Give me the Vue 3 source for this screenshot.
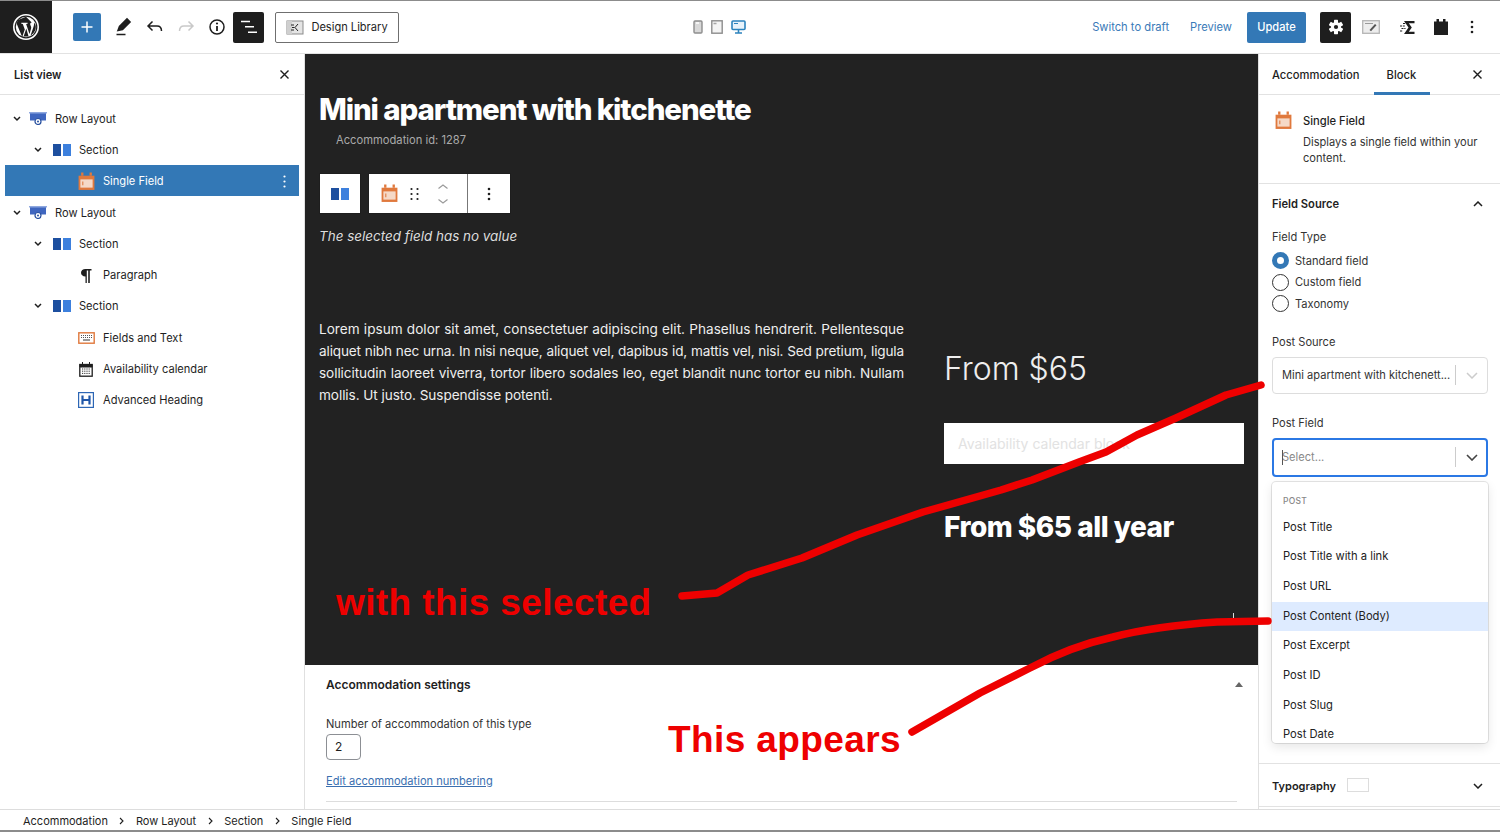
<script setup>
const listRows = [
  { label: 'Row Layout', depth: 0, icon: 'row', caret: true },
  { label: 'Section', depth: 1, icon: 'section', caret: true },
  { label: 'Single Field', depth: 2, icon: 'field', selected: true },
  { label: 'Row Layout', depth: 0, icon: 'row', caret: true },
  { label: 'Section', depth: 1, icon: 'section', caret: true },
  { label: 'Paragraph', depth: 2, icon: 'para' },
  { label: 'Section', depth: 1, icon: 'section', caret: true },
  { label: 'Fields and Text', depth: 2, icon: 'keys' },
  { label: 'Availability calendar', depth: 2, icon: 'cal' },
  { label: 'Advanced Heading', depth: 2, icon: 'head' }
]

const loremLines = [
  'Lorem ipsum dolor sit amet, consectetuer adipiscing elit. Phasellus hendrerit. Pellentesque',
  'aliquet nibh nec urna. In nisi neque, aliquet vel, dapibus id, mattis vel, nisi. Sed pretium, ligula',
  'sollicitudin laoreet viverra, tortor libero sodales leo, eget blandit nunc tortor eu nibh. Nullam',
  'mollis. Ut justo. Suspendisse potenti.'
]

const postFields = ['Post Title', 'Post Title with a link', 'Post URL', 'Post Content (Body)', 'Post Excerpt', 'Post ID', 'Post Slug', 'Post Date']
const crumbs = ['Accommodation', 'Row Layout', 'Section', 'Single Field']
const fieldTypes = ['Standard field', 'Custom field', 'Taxonomy']
</script>

<template>
  <div class="editor">
    <header class="topbar">
      <div class="wp-logo">
        <svg width="28" height="28" viewBox="0 0 28 28">
          <circle cx="14" cy="14" r="12.200" fill="none" stroke="#fff" stroke-width="1.600" />
          <circle cx="14" cy="14" r="10.200" fill="#fff" />
          <path d="M4.600 10.500 10.200 24l2.600-7.600-2-5.400-1.500-.2v-1h6.300v1l-1.500.2 3.400 10 1-3.400c.5-1.500.7-2.400.7-3.100 0-1.300-1-2.200-1-3.300 0-.8.6-1.500 1.500-1.600L14 3.800 6 7z" fill="#1e1e1e" />
          <path d="M14.300 15.500 11.700 23.300c1.500.4 3.100.4 4.800-.1zM22 9.500c.3 2.500-.4 4-1.200 6.400l-2.300 6.600C22 20.600 24 17 23.800 13.500c-.1-1.400-.8-2.900-1.800-4z" fill="#1e1e1e" />
        </svg>
      </div>
      <div class="tools-left">
        <button class="add-btn">
          <svg width="14" height="14" viewBox="0 0 14 14"><path d="M7 1.500v11M1.500 7h11" stroke="#fff" stroke-width="1.500" /></svg>
        </button>
        <svg class="ic pen" width="20" height="22" viewBox="0 0 20 22"><path d="M5 14.500 6.500 10.500 14 3l3 3-7.500 7.500zM3.500 18.500h9" fill="#1e1e1e" stroke="#1e1e1e" stroke-width="1.600" /></svg>
        <svg class="ic undo" width="18" height="14" viewBox="0 0 18 14"><path d="M6.500 1.500 2 6l4.500 4.500M2 6h9c2.800 0 4.500 1.800 4.500 5" fill="none" stroke="#1e1e1e" stroke-width="1.500" /></svg>
        <svg class="ic redo" width="18" height="14" viewBox="0 0 18 14"><path d="M11.500 1.500 16 6l-4.500 4.500M16 6H7c-2.800 0-4.500 1.800-4.500 5" fill="none" stroke="#c9c9c9" stroke-width="1.500" /></svg>
        <svg class="ic info" width="16" height="16" viewBox="0 0 16 16"><circle cx="8" cy="8" r="7" fill="none" stroke="#1e1e1e" stroke-width="1.500" /><path d="M8 7v5" stroke="#1e1e1e" stroke-width="1.800" /><circle cx="8" cy="4.500" r="1.100" fill="#1e1e1e" /></svg>
        <button class="dark-btn list-btn">
          <svg width="18" height="14" viewBox="0 0 18 14"><path d="M1 1.500h9M5 6.800h9M8 12.200h9" stroke="#fff" stroke-width="1.500" /></svg>
        </button>
        <button class="design-btn">
          <svg width="18" height="15" viewBox="0 0 18 15"><rect x="1" y="1" width="16" height="13" fill="#e4e4e4" stroke="#8b8b8b" /><rect x="1" y="1" width="5" height="13" fill="#cfcfcf" /><path d="M12 4 9 7.500l3 3.500M5 5h3M6 7.500h2.500M5 10h3" fill="none" stroke="#222" stroke-width="1" /></svg>
          Design Library
        </button>
      </div>
      <div class="devices">
        <svg width="10" height="14" viewBox="0 0 10 14"><rect x="1" y="1" width="8" height="12" rx="1" fill="#d8d8d8" stroke="#8d8d8d" stroke-width="1.400" /><path d="M3 3h3" stroke="#fff" stroke-width="1.500" /></svg>
        <svg width="12" height="14" viewBox="0 0 12 14"><rect x=".8" y=".8" width="10.400" height="12.400" fill="#f4f4f4" stroke="#8d8d8d" stroke-width="1.400" /><path d="M2.500 3.500h3" stroke="#a5a5a5" stroke-width="1.500" /></svg>
        <svg width="15" height="14" viewBox="0 0 15 14"><rect x="1" y="1" width="13" height="8.500" rx="1" fill="#e8f3fb" stroke="#2c83bd" stroke-width="1.600" /><path d="M3 3.500h4" stroke="#2c83bd" /><path d="M7.500 10v2.500M4 13h7" stroke="#2c83bd" stroke-width="1.600" /></svg>
      </div>
      <div class="tools-right">
        <a class="link draft">Switch to draft</a>
        <a class="link preview">Preview</a>
        <button class="update">Update</button>
        <button class="dark-btn gear">
          <svg width="16" height="16" viewBox="0 0 16 16">
            <g fill="#fff">
              <rect x="6" y=".8" width="4" height="14.400" rx=".6" />
              <rect x="6" y=".8" width="4" height="14.400" rx=".6" transform="rotate(60 8 8)" />
              <rect x="6" y=".8" width="4" height="14.400" rx=".6" transform="rotate(120 8 8)" />
              <circle cx="8" cy="8" r="5" />
            </g>
            <circle cx="8" cy="8" r="2.100" fill="#1e1e1e" />
          </svg>
        </button>
        <svg class="ic panel-a" width="18" height="14" viewBox="0 0 18 14"><rect x=".7" y=".7" width="16.600" height="12.600" fill="#ededed" stroke="#b5b5b5" stroke-width="1.300" /><path d="M3 3.500h8" stroke="#9a9a9a" /><path d="m7.500 10 5.500-6 1.500 1.300-5.500 6z" fill="#555" /></svg>
        <svg class="ic panel-b" width="16" height="15" viewBox="0 0 16 15"><path d="M5 1h10.500v2.200H9.800l3 4.300-3 4.300h5.700V14H5l4.500-6.500z" fill="#1e1e1e" /><path d="M4 3.500h3M1 6h5M2.500 8.500h4M1 11h3" stroke="#1e1e1e" stroke-width="1.100" stroke-dasharray="2 .8" /></svg>
        <svg class="ic panel-c" width="16" height="18" viewBox="0 0 16 18"><path d="M1 3.500h2.500V1h2.500v2.500h4V1h2.500v2.500H15V17H1z" fill="#1e1e1e" /></svg>
        <svg class="ic dots" width="4" height="14" viewBox="0 0 4 14"><circle cx="2" cy="2" r="1.300" fill="#1e1e1e" /><circle cx="2" cy="7" r="1.300" fill="#1e1e1e" /><circle cx="2" cy="12" r="1.300" fill="#1e1e1e" /></svg>
      </div>
    </header>

    <div class="body">
      <aside class="list-panel">
        <div class="panel-head">
          <span class="strong">List view</span>
          <svg width="11" height="11" viewBox="0 0 11 11"><path d="m1.500 1.500 8 8M9.500 1.500l-8 8" stroke="#1e1e1e" stroke-width="1.400" /></svg>
        </div>
        <ul class="tree">
          <li v-for="(row, i) in listRows" :key="i" class="tree-row" :class="['d' + row.depth, { selected: row.selected }]">
            <svg v-if="row.caret" class="caret" width="8" height="6" viewBox="0 0 8 6"><path d="m1 1 3 3 3-3" fill="none" stroke="#1e1e1e" stroke-width="1.500" /></svg>
            <span class="tree-icon">
              <svg v-if="row.icon === 'row'" width="18" height="13" viewBox="0 0 18 13"><path d="M1 1h16v7.500H1z" fill="#3f66bf" /><rect x="0" y="0" width="18" height="1.500" fill="#8fa8df" /><circle cx="9" cy="9.500" r="3" fill="#fff" stroke="#28509f" stroke-width="1.200" /><circle cx="9" cy="9.500" r="1" fill="#28509f" /></svg>
              <svg v-else-if="row.icon === 'section'" width="18" height="12" viewBox="0 0 18 12"><rect x="0" width="8" height="12" fill="#1d4f9f" /><rect x="10" width="8" height="12" fill="#3d80dd" /></svg>
              <svg v-else-if="row.icon === 'field'" width="17" height="19" viewBox="0 0 16 18"><path d="M.5 3.500h15V17H.5z" fill="#e0793d" /><path d="M4 .5v3M12 .5v3" stroke="#e0793d" stroke-width="2.200" /><rect x="2.200" y="7" width="11.600" height="7.800" fill="#f5d9c7" /><path d="M4.500 9v3.500" stroke="#e0793d" /></svg>
              <svg v-else-if="row.icon === 'para'" width="12" height="15" viewBox="0 0 12 15"><path d="M5.500 8.500C2.500 8.500 1 6.800 1 4.800 1 2.500 2.800 1 5.500 1H11.500V2.500H9.800V15H8.200V2.500H6.800V15H5.500z" fill="#1e1e1e" /></svg>
              <svg v-else-if="row.icon === 'keys'" width="17" height="12" viewBox="0 0 17 12"><rect x=".8" y=".8" width="15.400" height="10.400" fill="#fff" stroke="#e0793d" stroke-width="1.400" /><path d="M3 3.500h11M3 5.500h11" stroke="#555" stroke-dasharray="1 1" /><path d="M5 8h7" stroke="#555" stroke-width="1.200" /></svg>
              <svg v-else-if="row.icon === 'cal'" width="14" height="15" viewBox="0 0 14 15"><rect x=".8" y="2.500" width="12.400" height="11.700" fill="#fff" stroke="#1e1e1e" stroke-width="1.300" /><path d="M1 2.500h12V5H1zM3.500 0v3M10.500 0v3" fill="#1e1e1e" stroke="#1e1e1e" /><path d="M3 7h8M3 9.200h8M3 11.400h8" stroke="#333" stroke-dasharray="1.200 1" /></svg>
              <svg v-else width="16" height="16" viewBox="0 0 16 16"><rect x=".6" y=".6" width="14.800" height="14.800" fill="#fff" stroke="#2d66b5" stroke-width="1.200" /><path d="M4.500 3.500v9M11.500 3.500v9M4.500 8h7" fill="none" stroke="#1f56a8" stroke-width="2.200" /></svg>
            </span>
            <span class="tree-label">{{ row.label }}</span>
            <svg v-if="row.selected" class="row-dots" width="3" height="13" viewBox="0 0 3 13"><circle cx="1.500" cy="1.500" r="1.100" fill="#fff" /><circle cx="1.500" cy="6.500" r="1.100" fill="#fff" /><circle cx="1.500" cy="11.500" r="1.100" fill="#fff" /></svg>
          </li>
        </ul>
      </aside>

      <main class="center">
        <section class="canvas">
          <h1 class="title">Mini apartment with kitchenette</h1>
          <p class="acc-id">Accommodation id: 1287</p>
          <div class="block-bar">
            <div class="bar-group parent">
              <svg width="18" height="12" viewBox="0 0 18 12"><rect width="8" height="12" fill="#1d4f9f" /><rect x="10" width="8" height="12" fill="#3d80dd" /></svg>
            </div>
            <div class="bar-group main-tools">
              <svg class="bar-field" width="17" height="19" viewBox="0 0 16 18"><path d="M.5 3.500h15V17H.5z" fill="#e0793d" /><path d="M4 .5v3M12 .5v3" stroke="#e0793d" stroke-width="2.200" /><rect x="2.200" y="7" width="11.600" height="7.800" fill="#f5d9c7" /><path d="M4.500 9v3.500" stroke="#e0793d" /></svg>
              <svg class="bar-drag" width="9" height="14" viewBox="0 0 9 14"><g fill="#1e1e1e"><circle cx="1.500" cy="2" r="1.100" /><circle cx="7.500" cy="2" r="1.100" /><circle cx="1.500" cy="7" r="1.100" /><circle cx="7.500" cy="7" r="1.100" /><circle cx="1.500" cy="12" r="1.100" /><circle cx="7.500" cy="12" r="1.100" /></g></svg>
              <svg class="bar-move" width="12" height="20" viewBox="0 0 12 20"><path d="m1.500 4.500 4.500-3.500 4.500 3.500M1.500 15.500l4.500 3.500 4.500-3.500" fill="none" stroke="#9b9b9b" stroke-width="1.200" /></svg>
              <span class="bar-sep"></span>
              <svg class="bar-more" width="4" height="14" viewBox="0 0 4 14"><circle cx="2" cy="2" r="1.300" fill="#1e1e1e" /><circle cx="2" cy="7" r="1.300" fill="#1e1e1e" /><circle cx="2" cy="12" r="1.300" fill="#1e1e1e" /></svg>
            </div>
          </div>
          <p class="no-value">The selected field has no value</p>
          <div class="columns">
            <div class="lorem">
              <p v-for="line in loremLines" :key="line" class="lorem-line">{{ line }}</p>
            </div>
            <div class="side">
              <div class="from">From $65</div>
              <div class="avail"><span>Availability calendar block</span></div>
              <div class="all-year">From $65 all year</div>
            </div>
          </div>
          <span class="inserter"></span>
        </section>

        <section class="meta">
          <div class="meta-head">
            <span class="meta-title">Accommodation settings</span>
            <svg class="meta-tri" width="8" height="5" viewBox="0 0 8 5"><path d="M4 0 8 5H0z" fill="#666" /></svg>
          </div>
          <label class="meta-label">Number of accommodation of this type</label>
          <div class="num-input">2</div>
          <a class="meta-link">Edit accommodation numbering</a>
          <div class="meta-rule"></div>
        </section>
      </main>

      <aside class="settings">
        <div class="tabs">
          <span class="tab">Accommodation</span>
          <span class="tab active">Block</span>
          <svg class="tabs-close" width="11" height="11" viewBox="0 0 11 11"><path d="m1.500 1.500 8 8M9.500 1.500l-8 8" stroke="#1e1e1e" stroke-width="1.400" /></svg>
        </div>
        <div class="block-card">
          <svg class="card-icon" width="17" height="19" viewBox="0 0 16 18"><path d="M.5 3.500h15V17H.5z" fill="#e0793d" /><path d="M4 .5v3M12 .5v3" stroke="#e0793d" stroke-width="2.200" /><rect x="2.200" y="7" width="11.600" height="7.800" fill="#f5d9c7" /><path d="M4.500 9v3.500" stroke="#e0793d" /></svg>
          <div class="card-text">
            <div class="card-title">Single Field</div>
            <div class="card-desc">Displays a single field within your content.</div>
          </div>
        </div>
        <div class="field-source">
          <div class="fs-head">
            <span class="strong">Field Source</span>
            <svg width="10" height="6" viewBox="0 0 10 6"><path d="m1 5 4-4 4 4" fill="none" stroke="#1e1e1e" stroke-width="1.500" /></svg>
          </div>
          <div class="fs-label type-label">Field Type</div>
          <div class="radios">
            <div v-for="(t, i) in fieldTypes" :key="t" class="radio-row">
              <span class="radio" :class="{ on: i === 0 }"></span>{{ t }}
            </div>
          </div>
          <div class="fs-label source-label">Post Source</div>
          <div class="select">
            <span class="select-value">Mini apartment with kitchenett...</span>
            <span class="select-sep"></span>
            <svg width="12" height="7" viewBox="0 0 12 7"><path d="m1 1 5 5 5-5" fill="none" stroke="#ccc" stroke-width="1.500" /></svg>
          </div>
          <div class="fs-label field-label">Post Field</div>
          <div class="select focused">
            <span class="cursor"></span>
            <span class="select-placeholder">Select...</span>
            <span class="select-sep"></span>
            <svg width="12" height="7" viewBox="0 0 12 7"><path d="m1 1 5 5 5-5" fill="none" stroke="#444" stroke-width="1.600" /></svg>
          </div>
          <div class="menu">
            <div class="menu-group">POST</div>
            <div v-for="f in postFields" :key="f" class="menu-item" :class="{ hover: f === 'Post Content (Body)' }">{{ f }}</div>
          </div>
        </div>
        <div class="typo">
          <span class="strong typo-title">Typography</span>
          <span class="swatch"></span>
          <svg class="typo-caret" width="10" height="6" viewBox="0 0 10 6"><path d="m1 1 4 4 4-4" fill="none" stroke="#1e1e1e" stroke-width="1.500" /></svg>
        </div>
      </aside>
    </div>

    <footer class="crumbs">
      <template v-for="(c, i) in crumbs" :key="c">
        <span>{{ c }}</span>
        <svg v-if="i < crumbs.length - 1" width="5" height="8" viewBox="0 0 5 8"><path d="m1 1 3 3-3 3" fill="none" stroke="#1e1e1e" stroke-width="1.100" /></svg>
      </template>
    </footer>

    <!-- hand drawn notes on top of the screenshot -->
    <svg class="scribble" width="1500" height="832" viewBox="0 0 1500 832">
      <path d="M682 596 717 593 748 575 802 558 857 535 923 512 1001 490 1032 480 1079 462 1106 452 1137 435 1176 418 1226 395 1261 385" fill="none" stroke="#ee0000" stroke-width="7.500" stroke-linecap="round" stroke-linejoin="round" />
      <path d="M912 732 980 693 1030 668C1060 652 1090 642 1113 637 1140 630 1170 625 1217 622L1268 621" fill="none" stroke="#ee0000" stroke-width="7.500" stroke-linecap="round" stroke-linejoin="round" />
    </svg>
    <div class="note note-a">with this selected</div>
    <div class="note note-b">This appears</div>
  </div>
</template>

<style>
html, body { margin: 0; background: #fff; }
</style>

<style scoped>
.editor {
  position: relative;
  width: 1500px;
  height: 832px;
  overflow: hidden;
  display: flex;
  flex-direction: column;
  font-family: Inter, "Liberation Sans", sans-serif;
  font-size: 11.100px;
  color: #1e1e1e;
  background: #fff;
  border-top: 1px solid #8c8c8c;
  box-sizing: border-box;
}
button { font-family: inherit; border: 0; padding: 0; }
p, h1, ul { margin: 0; padding: 0; }
.strong { font-weight: 600; font-size: 11.200px; }

.topbar {
  height: 52px;
  flex: none;
  display: flex;
  align-items: center;
  position: relative;
}
.wp-logo {
  width: 52px;
  height: 52px;
  background: #1e1e1e;
  display: flex;
  align-items: center;
  justify-content: center;
}
.tools-left { display: flex; align-items: center; margin-left: 21px; }
.add-btn {
  width: 28px;
  height: 28px;
  background: #3378b6;
  border-radius: 2px;
  display: flex;
  align-items: center;
  justify-content: center;
}
.pen { margin-left: 12px; }
.undo { margin-left: 13px; }
.redo { margin-left: 13px; }
.info { margin-left: 14px; }
.dark-btn {
  width: 31px;
  height: 31px;
  background: #1e1e1e;
  border-radius: 2px;
  display: flex;
  align-items: center;
  justify-content: center;
}
.list-btn { margin-left: 8px; }
.design-btn {
  margin-left: 11px;
  width: 124px;
  height: 31px;
  border: 1px solid #6f6f6f;
  border-radius: 2px;
  background: #fff;
  color: #1e1e1e;
  font-size: 11.100px;
  display: flex;
  align-items: center;
  justify-content: center;
  gap: 7px;
}
.devices {
  position: absolute;
  left: 693px;
  top: 19px;
  display: flex;
  gap: 8px;
  align-items: center;
}
.tools-right {
  margin-left: auto;
  display: flex;
  align-items: center;
}
.link { color: #3a7ab8; font-size: 11.200px; }
.preview { margin-left: 21px; }
.update {
  margin-left: 15px;
  width: 59px;
  height: 31px;
  background: #3378b6;
  color: #fff;
  font-size: 11.100px;
  font-weight: 500;
  border-radius: 2px;
}
.gear { margin-left: 14px; }
.panel-a { margin-left: 11px; }
.panel-b { margin-left: 19px; }
.panel-c { margin-left: 18px; }
.dots { margin-left: 21px; margin-right: 26px; }

.body { flex: 1; display: flex; min-height: 0; border-top: 1px solid #e2e2e2; }

.list-panel { width: 305px; flex: none; border-right: 1px solid #e0e0e0; box-sizing: border-box; }
.panel-head {
  height: 41px;
  box-sizing: border-box;
  border-bottom: 1px solid #e2e2e2;
  display: flex;
  align-items: center;
  justify-content: space-between;
  padding: 1px 14px 0;
}
.tree { list-style: none; padding: 7.500px 5px 0; }
.tree-row {
  height: 31.300px;
  box-sizing: border-box;
  padding-top: 1px;
  display: flex;
  align-items: center;
  position: relative;
  font-size: 11.100px;
}
.caret { position: absolute; }
.d0 { padding-left: 24px; }
.d0 .caret { left: 8px; }
.d1 { padding-left: 48px; }
.d1 .caret { left: 29px; }
.d2 { padding-left: 72px; }
.tree-icon { width: 18px; display: flex; justify-content: center; align-items: center; margin-right: 8px; }
.selected { background: #3378b6; color: #fff; }
.row-dots { position: absolute; right: 13px; }

.center { flex: 1; min-width: 0; display: flex; flex-direction: column; }
.canvas {
  height: 611px;
  flex: none;
  background: #222;
  color: #fff;
  padding: 37px 14px 0;
  box-sizing: border-box;
  position: relative;
}
.title {
  font-size: 29.500px;
  line-height: 36px;
  font-weight: 800;
  letter-spacing: -1.100px;
}
.acc-id {
  margin: 5px 0 0 17px;
  font-size: 11.200px;
  line-height: 16px;
  color: #aaa;
}
.block-bar { display: flex; gap: 7px; margin-top: 25px; }
.bar-group {
  height: 41px;
  background: #fff;
  border: 1px solid #1e1e1e;
  box-sizing: border-box;
  display: flex;
  align-items: center;
}
.parent { width: 42px; justify-content: center; }
.main-tools { width: 143px; position: relative; }
.bar-field { margin-left: 12px; }
.bar-drag { margin-left: 12px; }
.bar-move { margin-left: 18px; }
.bar-sep { position: absolute; left: 98px; top: 0; bottom: 0; width: 1px; background: #777; }
.bar-more { position: absolute; left: 118px; top: 13px; }
.no-value { margin-top: 13px; font-style: italic; font-size: 13.450px; line-height: 18px; color: #ddd; }
.columns { display: flex; margin-top: 72.500px; }
.lorem {
  width: 585px;
  margin-right: 40px;
  flex: none;
  font-size: 13.600px;
  line-height: 22.300px;
  letter-spacing: -.15px;
  color: #eee;
}
.lorem-line { white-space: nowrap; text-align: justify; text-align-last: justify; }
.lorem-line:nth-child(1) { letter-spacing: 0; }
.lorem-line:nth-child(3) { letter-spacing: -.08px; }
.lorem-line:last-child { text-align-last: left; letter-spacing: -.07px; }
.side { width: 300px; }
.from { margin-top: 30px; font-size: 32px; line-height: 42px; color: #eee; font-weight: 300; }
.avail {
  margin-top: 33px;
  height: 41px;
  background: #fff;
  display: flex;
  align-items: center;
  padding-left: 14px;
  color: #e2e2e2;
  font-size: 14px;
}
.all-year {
  margin-top: 45px;
  font-size: 28px;
  line-height: 36px;
  font-weight: 800;
  letter-spacing: -.5px;
}
.inserter { position: absolute; left: 928px; bottom: 46px; width: 1px; height: 6px; background: #ddd; }

.meta { flex: 1; padding: 0 21px; position: relative; box-sizing: border-box; }
.meta-head { height: 39px; display: flex; align-items: center; justify-content: space-between; }
.meta-title { font-weight: 600; font-size: 12px; }
.meta-tri { margin-right: -6px; }
.meta-label { display: block; margin-top: 12px; font-size: 11.100px; line-height: 16px; color: #333; }
.num-input {
  width: 35px;
  height: 26px;
  margin-top: 2px;
  border: 1px solid #8c8f94;
  border-radius: 4px;
  box-sizing: border-box;
  padding-left: 8px;
  line-height: 24px;
  font-size: 12px;
}
.meta-link { display: block; margin-top: 13px; color: #3a6fb0; text-decoration: underline; font-size: 11.100px; line-height: 16px; }
.meta-rule { height: 1px; background: #ddd; margin-top: 12px; }

.settings { width: 242px; flex: none; border-left: 1px solid #e0e0e0; box-sizing: border-box; position: relative; }
.tabs {
  height: 41px;
  box-sizing: border-box;
  border-bottom: 1px solid #e2e2e2;
  display: flex;
  align-items: center;
  padding: 1px 0 0 13px;
  position: relative;
  font-weight: 500;
}
.tab { font-size: 11.200px; }
.active {
  margin-left: 27px;
  height: 100%;
  display: flex;
  align-items: center;
  position: relative;
}
.active::after {
  content: "";
  position: absolute;
  left: -13px;
  right: -14px;
  bottom: -1px;
  height: 3px;
  background: #3378b6;
}
.tabs-close { position: absolute; right: 17px; top: 15px; }
.block-card {
  display: flex;
  height: 89px;
  box-sizing: border-box;
  padding: 16px 14px 0 16px;
  border-bottom: 1px solid #e2e2e2;
  gap: 11px;
}
.card-icon { flex: none; }
.card-text { padding-top: 2px; }
.card-title { font-weight: 500; font-size: 11.200px; line-height: 16px; }
.card-desc { margin-top: 6px; font-size: 11.100px; line-height: 15.500px; color: #333; }
.field-source { padding: 0 13px; position: relative; box-sizing: border-box; border-bottom: 1px solid #e2e2e2; height: 580px; }
.fs-head { height: 40px; display: flex; align-items: center; justify-content: space-between; padding-right: 4px; }
.fs-label { font-size: 11.100px; line-height: 15px; color: #333; }
.type-label { margin-top: 6px; }
.radios { margin-top: 5px; }
.radio-row { height: 21.500px; display: flex; align-items: center; gap: 6px; font-size: 11.100px; color: #333; }
.radio { width: 17px; height: 17px; box-sizing: border-box; border: 1px solid #333; border-radius: 50%; background: #fff; }
.radio.on { border: 5px solid #3378b6; }
.source-label { margin-top: 20px; }
.select {
  margin-top: 7px;
  width: 216px;
  height: 37px;
  box-sizing: border-box;
  border: 1px solid #ddd;
  border-radius: 4px;
  display: flex;
  align-items: center;
  padding: 0 9px;
  font-size: 11.100px;
  position: relative;
  color: #333;
}
.select-value { flex: 1; white-space: nowrap; }
.select-placeholder { flex: 1; color: #888; }
.select-sep { width: 1px; height: 20px; background: #ccc; margin-right: 10px; }
.field-label { margin-top: 22.500px; }
.focused { border: 2px solid #2b78e4; height: 39px; margin-top: 6.500px; padding: 0 8px; }
.cursor { position: absolute; left: 8px; top: 10px; width: 1px; height: 15px; background: #555; }
.menu {
  position: absolute;
  left: 13px;
  top: 298px;
  width: 216px;
  height: 261px;
  box-sizing: border-box;
  overflow: hidden;
  background: #fff;
  border-radius: 4px;
  box-shadow: 0 0 0 1px rgba(0, 0, 0, .1), 0 4px 11px rgba(0, 0, 0, .1);
}
.menu-group { padding: 14px 11px 5.500px; font-size: 8.500px; line-height: 11px; color: #888; font-weight: 500; letter-spacing: .3px; }
.menu-item { height: 29.700px; line-height: 29.700px; padding-left: 11px; font-size: 11.200px; color: #222; }
.hover { background: #deebff; }
.typo {
  height: 43px;
  box-sizing: border-box;
  padding: 2px 13px 0;
  display: flex;
  align-items: center;
  border-bottom: 1px solid #e2e2e2;
}
.typo-title { font-size: 11px; }
.swatch { width: 22px; height: 14px; box-sizing: border-box; border: 1px solid #ddd; margin-left: 11px; margin-top: -3px; background: #fff; }
.typo-caret { margin-left: auto; margin-right: 4px; }

.crumbs {
  height: 23px;
  flex: none;
  display: flex;
  align-items: center;
  gap: 11.500px;
  padding: 1px 0 0 23px;
  border-top: 1px solid #ddd;
  border-bottom: 2px solid #8c8c8c;
  box-sizing: border-box;
  font-size: 11px;
  background: #fff;
  position: relative;
}

.scribble { position: absolute; left: 0; top: -1px; pointer-events: none; }
.note {
  position: absolute;
  color: #ee0000;
  font-family: "Liberation Sans", Arial, sans-serif;
  font-weight: 700;
  font-size: 37px;
  line-height: 44px;
  white-space: nowrap;
  letter-spacing: .4px;
}
.note-a { left: 336px; top: 580px; }
.note-b { left: 668px; top: 717px; }
</style>
